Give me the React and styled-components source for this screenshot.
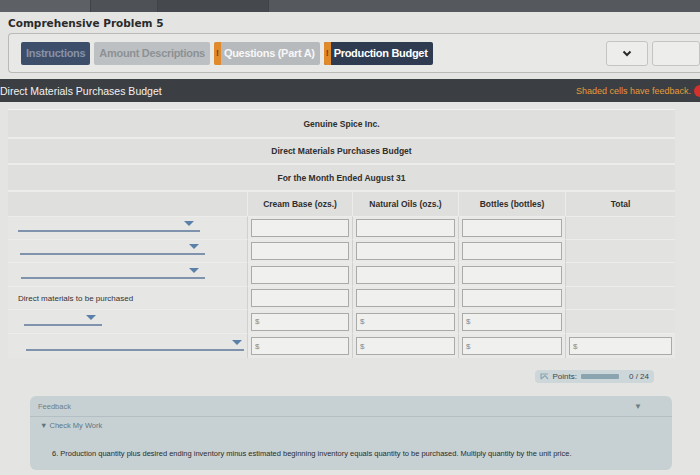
import React from 'react'
import styled, { createGlobalStyle } from 'styled-components'

const GlobalStyle = createGlobalStyle`
  html, body { margin: 0; padding: 0; background: #e4e4e2; }
  body { font-family: "Liberation Sans", Arial, sans-serif; width: 700px; height: 475px; overflow: hidden; }
`

const TopStrip = styled.div`
  display: flex;
  height: 12px;
  background: #55585c;
  div {
    width: 90px;
    border-right: 1px solid #3f4246;
    background: #5d6064;
  }
  div:nth-child(2) { width: 66px; background: #4e5155; }
  div:nth-child(3) { width: 110px; background: #45484c; }
`

const Page = styled.div`
  display: flex;
  flex-direction: column;
`

const Title = styled.h1`
  margin: 0;
  padding: 5px 8px 4px;
  font-family: "DejaVu Sans", Verdana, sans-serif;
  font-size: 10.5px;
  font-weight: bold;
  color: #2a2a2a;
`

const TabBar = styled.div`
  display: flex;
  align-items: center;
  gap: 4px;
  margin: 0 0 0 8px;
  padding: 5px 0 5px 12px;
  height: 28px;
  border: 1px solid #b9b9b7;
  border-right: none;
  border-radius: 4px 0 0 4px;
  background: #e8e8e6;
`

const Tab = styled.div`
  display: flex;
  align-items: center;
  height: 23px;
  padding: 0 ${p => (p.$flag ? '5px 0 0' : '5px')};
  border-radius: 2px;
  font-family: "Liberation Sans", Arial, sans-serif;
  font-size: 11px;
  font-weight: bold;
  letter-spacing: -0.3px;
  background: ${p => p.$bg};
  color: ${p => p.$fg};
  overflow: hidden;
`

const Flag = styled.span`
  display: flex;
  align-items: center;
  justify-content: center;
  width: 7px;
  height: 100%;
  margin-right: 3px;
  background: #e08a2c;
  color: #7a3d00;
  font-size: 9px;
`

const TabSpacer = styled.div`
  flex: 1;
`

const NavButton = styled.div`
  display: flex;
  align-items: center;
  justify-content: center;
  width: ${p => p.$w}px;
  height: 23px;
  border: 1px solid #c4c4c2;
  border-radius: 3px;
  background: #ededeb;
`

const SectionBar = styled.div`
  display: flex;
  justify-content: space-between;
  align-items: center;
  height: 23px;
  margin-top: 6px;
  background: #3b3e43;
  color: #f2f2f2;
  font-size: 10.5px;
`

const Feedback = styled.span`
  display: flex;
  align-items: center;
  gap: 3px;
  color: #e89a3a;
  font-size: 9px;
  &::after {
    content: '';
    width: 6px;
    height: 12px;
    border-radius: 6px 0 0 6px;
    background: #d3312b;
  }
`

const Table = styled.div`
  display: grid;
  grid-template-columns: 239px 105px 106px 107px 110px;
  margin: 7px 0 0 8px;
  width: 667px;
  background: #dfdfdd;
  border-top: 1px solid #f2f2f0;
`

const HeadRow = styled.div`
  grid-column: 1 / -1;
  display: flex;
  align-items: center;
  justify-content: center;
  height: ${p => p.$h}px;
  border-bottom: 2px solid #ececea;
  font-size: 8.5px;
  font-weight: bold;
  color: #2e2e2e;
`

const ColHead = styled.div`
  display: flex;
  align-items: center;
  justify-content: center;
  height: 24px;
  border-left: ${p => (p.$first ? 'none' : '1px solid #ececea')};
  font-size: 8.5px;
  font-weight: bold;
  color: #2e2e2e;
`

const Label = styled.div`
  display: flex;
  align-items: flex-end;
  height: ${p => p.$h}px;
  padding: 0 0 7px ${p => p.$pad || 10}px;
  box-sizing: border-box;
  border-top: 1px solid #ececea;
  background: #e6e6e4;
  font-size: 8px;
  color: #333;
  ${p => p.$text && 'align-items: center; padding-bottom: 0;'}
`

const Select = styled.div`
  position: relative;
  width: ${p => p.$w}px;
  height: 10px;
  border-bottom: 2px solid #7f93ad;
  &::after {
    content: '';
    position: absolute;
    right: ${p => p.$arrow || 4}px;
    top: 1px;
    border-left: 5px solid transparent;
    border-right: 5px solid transparent;
    border-top: 5px solid #5a7fa8;
  }
`

const Cell = styled.div`
  display: flex;
  align-items: center;
  height: ${p => p.$h}px;
  padding: 0 3px;
  box-sizing: border-box;
  border-top: 1px solid #ececea;
  border-left: 1px solid #d0d0ce;
  background: ${p => (p.$empty ? '#e2e2e0' : '#e9e9e7')};
`

const Input = styled.div`
  flex: 1;
  display: flex;
  align-items: center;
  height: 16px;
  padding-left: 3px;
  border: 1px solid #aaaaa8;
  background: #f0f0ee;
  font-size: 8px;
  color: #8a8a88;
`

const PointsRow = styled.div`
  display: flex;
  justify-content: flex-end;
  padding: 12px 46px 0 0;
`

const Points = styled.div`
  display: flex;
  align-items: center;
  gap: 4px;
  height: 13px;
  padding: 0 5px;
  border-radius: 4px;
  background: #cdd6d9;
  font-size: 8px;
  color: #39474d;
`

const Bar = styled.span`
  width: 38px;
  height: 5px;
  margin-right: 6px;
  border-radius: 1px;
  background: #8aa5b0;
`

const FeedbackPanel = styled.div`
  margin: 13px 28px 0 30px;
  border-radius: 6px;
  background: #c7d1d3;
  color: #6e7f86;
`

const FeedbackHead = styled.div`
  display: flex;
  justify-content: space-between;
  align-items: center;
  height: 20px;
  padding: 0 30px 0 8px;
  border-bottom: 1px solid #b3bfc2;
  font-size: 7.5px;
  span:last-child { font-size: 8px; color: #6c7e86; }
`

const FeedbackBody = styled.div`
  display: flex;
  flex-direction: column;
  gap: 19px;
  padding: 4px 8px 12px 10px;
  font-size: 7.5px;
  p { margin: 0 0 0 12px; color: #2c2c2c; }
`

const CheckMyWork = styled.div`
  color: #5f7683;
`

const rows = [
  { kind: 'select', w: 182, pad: 10, h: 23 },
  { kind: 'select', w: 185, pad: 12, h: 23 },
  { kind: 'select', w: 184, pad: 13, h: 24 },
  { kind: 'text', text: 'Direct materials to be purchased', h: 23 },
  { kind: 'select', w: 78, pad: 16, dollar: true, h: 24 },
  { kind: 'select', w: 218, pad: 18, dollar: true, total: true, h: 25 }
]

export default function App() {
  return (
    <>
      <GlobalStyle />
      <TopStrip><div /><div /><div /></TopStrip>
      <Page>
        <Title>Comprehensive Problem 5</Title>
        <TabBar>
          <Tab $bg="#3d4e6b" $fg="#8792a6">Instructions</Tab>
          <Tab $bg="#bcc0c3" $fg="#8d9194">Amount Descriptions</Tab>
          <Tab $flag $bg="#b6babd" $fg="#f7f7f7"><Flag>!</Flag>Questions (Part A)</Tab>
          <Tab $flag $bg="#2e3b50" $fg="#ffffff"><Flag>!</Flag>Production Budget</Tab>
          <TabSpacer />
          <NavButton $w={40}>
            <svg width="10" height="7" viewBox="0 0 10 7">
              <path d="M1.5 1.5 L5 5 L8.5 1.5" fill="none" stroke="#2a2a2a" strokeWidth="2" />
            </svg>
          </NavButton>
          <NavButton $w={46} />
        </TabBar>
        <SectionBar>
          <span>Direct Materials Purchases Budget</span>
          <Feedback>Shaded cells have feedback.</Feedback>
        </SectionBar>
        <Table>
          <HeadRow $h={27}>Genuine Spice Inc.</HeadRow>
          <HeadRow $h={24}>Direct Materials Purchases Budget</HeadRow>
          <HeadRow $h={25}>For the Month Ended August 31</HeadRow>
          <ColHead $first />
          <ColHead>Cream Base (ozs.)</ColHead>
          <ColHead>Natural Oils (ozs.)</ColHead>
          <ColHead>Bottles (bottles)</ColHead>
          <ColHead>Total</ColHead>
          {rows.map((r, i) => (
            <React.Fragment key={i}>
              {r.kind === 'text' ? (
                <Label $text $h={r.h}>{r.text}</Label>
              ) : (
                <Label $pad={r.pad} $h={r.h}>
                  <Select $w={r.w} $arrow={i === 5 ? 2 : 6} />
                </Label>
              )}
              {[0, 1, 2].map(c => (
                <Cell key={c} $h={r.h}>
                  <Input>{r.dollar ? '$' : ''}</Input>
                </Cell>
              ))}
              {r.total ? (
                <Cell $h={r.h}><Input>$</Input></Cell>
              ) : (
                <Cell $empty $h={r.h} />
              )}
            </React.Fragment>
          ))}
        </Table>
        <PointsRow>
          <Points>
            <svg width="9" height="7" viewBox="0 0 9 7">
              <path d="M1 6 L1 1 L8 1 M1 6 L5 2.5 L8 6" fill="none" stroke="#8aa5b0" strokeWidth="1.2" />
            </svg>
            <span>Points:</span>
            <Bar />
            <span>0 / 24</span>
          </Points>
        </PointsRow>
        <FeedbackPanel>
          <FeedbackHead>
            <span>Feedback</span>
            <span>▼</span>
          </FeedbackHead>
          <FeedbackBody>
            <CheckMyWork>▼ Check My Work</CheckMyWork>
            <p>6. Production quantity plus desired ending inventory minus estimated beginning inventory equals quantity to be purchased. Multiply quantity by the unit price.</p>
          </FeedbackBody>
        </FeedbackPanel>
      </Page>
    </>
  )
}
